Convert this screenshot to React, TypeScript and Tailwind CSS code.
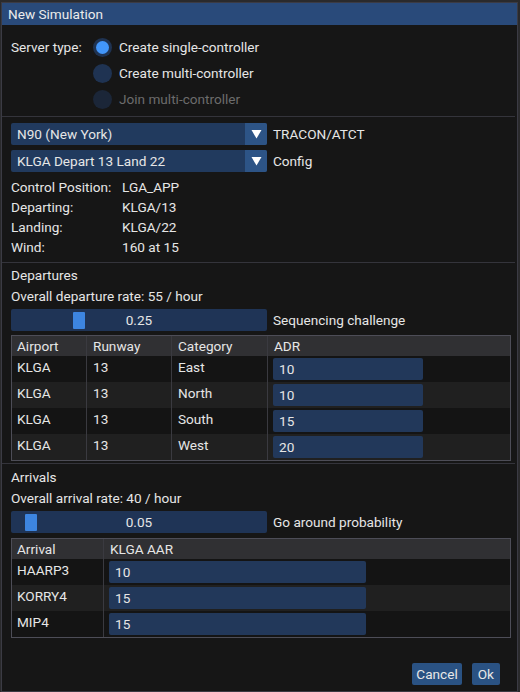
const font = { fontFamily: "Roboto, 'Noto Sans', sans-serif" };

function Radio({ label, checked, disabled }: { label: string; checked?: boolean; disabled?: boolean }) {
  return (
    <div className="flex items-center h-[19px]">
      <div
        className={`w-[19px] h-[19px] rounded-full flex items-center justify-center ${
          disabled ? "bg-[#1b2638]" : "bg-[#1f3352]"
        }`}
      >
        {checked && <div className="w-[13px] h-[13px] rounded-full bg-[#4296fa]" />}
      </div>
      <span className={`ml-[7px] ${disabled ? "text-[#6c6c6c]" : "text-[#e6e6e6]"}`}>{label}</span>
    </div>
  );
}

function Combo({ value, label }: { value: string; label: string }) {
  return (
    <div className="flex items-center h-[22px]">
      <div className="w-[256px] h-[22px] bg-[#213a5e] rounded-[2px] flex items-center">
        <span className="flex-1 pl-[6px] text-[#e6e6e6]">{value}</span>
        <div className="w-[22px] h-[22px] bg-[#2d5486] rounded-r-[2px] flex items-center justify-center">
          <svg width="11" height="10" viewBox="0 0 11 10">
            <polygon points="0.5,1 10.5,1 5.5,9.5" fill="#ffffff" />
          </svg>
        </div>
      </div>
      <span className="ml-[6px] text-[#e6e6e6]">{label}</span>
    </div>
  );
}

function Slider({ value, grab, label }: { value: string; grab: number; label: string }) {
  return (
    <div className="flex items-center h-[22px]">
      <div className="relative w-[256px] h-[22px] bg-[#1f3456] rounded-[2px] flex items-center justify-center">
        <div
          className="absolute top-[3px] w-[12px] h-[17px] bg-[#3d85e0] rounded-[1px]"
          style={{ left: grab }}
        />
        <span className="relative text-[#e6e6e6]">{value}</span>
      </div>
      <span className="ml-[6px] text-[#e6e6e6]">{label}</span>
    </div>
  );
}

function Field({ value, width }: { value: string; width: number }) {
  return (
    <div className="h-[22px] bg-[#22385a] rounded-[2px] flex items-center pl-[6px] text-[#e6e6e6]" style={{ width }}>
      {value}
    </div>
  );
}

const departures = [
  { runway: "13", cat: "East", adr: "10" },
  { runway: "13", cat: "North", adr: "10" },
  { runway: "13", cat: "South", adr: "15" },
  { runway: "13", cat: "West", adr: "20" },
];

const arrivals = [
  { name: "HAARP3", aar: "10" },
  { name: "KORRY4", aar: "15" },
  { name: "MIP4", aar: "15" },
];

function Separator({ mt }: { mt: string }) {
  return <div className={`${mt} h-px bg-[#34343b] -mx-[9px] mr-[-7px]`} />;
}

export default function App() {
  return (
    <div className="w-[520px] h-[692px] bg-[#2a2a2c] pt-[2px] pl-[1px] overflow-hidden text-[13.6px]" style={font}>
      <div className="w-[517px] h-[690px] border border-[#3b3b44] bg-[#161616] flex flex-col">
        <div className="h-[22px] bg-[#294a7a] flex items-center pl-[6px] text-[#ececec]">New Simulation</div>

        <div className="flex-1 flex flex-col px-[9px]">
          {/* server type */}
          <div className="flex mt-[13px]">
            <div className="w-[82px] h-[19px] flex items-center text-[#e6e6e6]">Server type:</div>
            <div className="flex flex-col gap-[7px]">
              <Radio label="Create single-controller" checked />
              <Radio label="Create multi-controller" />
              <Radio label="Join multi-controller" disabled />
            </div>
          </div>

          <Separator mt="mt-[7px]" />

          <div className="mt-[6px] flex flex-col gap-[5px]">
            <Combo value="N90 (New York)" label="TRACON/ATCT" />
            <Combo value="KLGA Depart 13 Land 22" label="Config" />
          </div>

          <div className="mt-[5px] text-[#e6e6e6]">
            {[
              ["Control Position:", "LGA_APP"],
              ["Departing:", "KLGA/13"],
              ["Landing:", "KLGA/22"],
              ["Wind:", "160 at 15"],
            ].map(([k, v]) => (
              <div key={k} className="flex h-[20px] items-center">
                <span className="w-[111px]">{k}</span>
                <span>{v}</span>
              </div>
            ))}
          </div>

          <Separator mt="mt-[5px]" />

          {/* departures */}
          <div className="mt-[2px] h-[20px] flex items-center text-[#e6e6e6]">Departures</div>
          <div className="mt-[1px] h-[20px] flex items-center text-[#e6e6e6]">Overall departure rate: 55 / hour</div>
          <div className="mt-[3px]">
            <Slider value="0.25" grab={62} label="Sequencing challenge" />
          </div>

          <div className="mt-[4px] w-[500px] border border-[#4d4d57] text-[#e6e6e6]">
            <div className="flex h-[20px] bg-[#303033]">
              <div className="w-[75px] pl-[5px] flex items-center border-r border-[#3a3a40]">Airport</div>
              <div className="w-[85px] pl-[6px] flex items-center border-r border-[#3a3a40]">Runway</div>
              <div className="w-[96px] pl-[6px] flex items-center border-r border-[#3a3a40]">Category</div>
              <div className="flex-1 pl-[6px] flex items-center">ADR</div>
            </div>
            {departures.map((d, i) => (
              <div key={d.cat} className={`flex h-[26px] ${i % 2 ? "bg-[#202020]" : "bg-[#141414]"}`}>
                <div className="w-[75px] pl-[5px] pt-[1px] border-r border-[#3a3a40] leading-[20px]">KLGA</div>
                <div className="w-[85px] pl-[6px] pt-[1px] border-r border-[#3a3a40] leading-[20px]">{d.runway}</div>
                <div className="w-[96px] pl-[6px] pt-[1px] border-r border-[#3a3a40] leading-[20px]">{d.cat}</div>
                <div className="flex-1 pl-[5px] pt-[2px]">
                  <Field value={d.adr} width={150} />
                </div>
              </div>
            ))}
          </div>

          <Separator mt="mt-[2px]" />

          {/* arrivals */}
          <div className="mt-[3px] h-[20px] flex items-center text-[#e6e6e6]">Arrivals</div>
          <div className="mt-[1px] h-[20px] flex items-center text-[#e6e6e6]">Overall arrival rate: 40 / hour</div>
          <div className="mt-[3px]">
            <Slider value="0.05" grab={14} label="Go around probability" />
          </div>

          <div className="mt-[5px] w-[500px] border border-[#4d4d57] text-[#e6e6e6]">
            <div className="flex h-[20px] bg-[#303033]">
              <div className="w-[92px] pl-[5px] flex items-center border-r border-[#3a3a40]">Arrival</div>
              <div className="flex-1 pl-[6px] flex items-center">KLGA AAR</div>
            </div>
            {arrivals.map((a, i) => (
              <div key={a.name} className={`flex h-[26px] ${i % 2 ? "bg-[#202020]" : "bg-[#141414]"}`}>
                <div className="w-[92px] pl-[5px] pt-[1px] border-r border-[#3a3a40] leading-[20px]">{a.name}</div>
                <div className="flex-1 pl-[5px] pt-[2px]">
                  <Field value={a.aar} width={257} />
                </div>
              </div>
            ))}
          </div>

          <div className="mt-auto mb-[6px] flex justify-end gap-[10px] mr-[8px]">
            <button className="h-[22px] px-[4px] bg-[#2a5283] rounded-[2px] text-[#e8e8e8]">Cancel</button>
            <button className="h-[22px] px-[6px] bg-[#2a5283] rounded-[2px] text-[#e8e8e8]">Ok</button>
          </div>
        </div>
      </div>
    </div>
  );
}
